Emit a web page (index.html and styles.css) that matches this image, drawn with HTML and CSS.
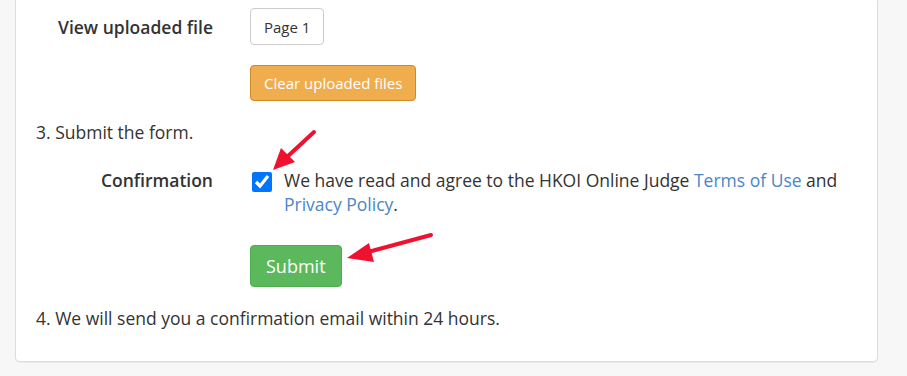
FILE: index.html
```html
<!DOCTYPE html>
<html lang="en">
<head>
  <meta charset="UTF-8">
  <title>Register</title>
  <link rel="stylesheet" href="styles.css">
</head>
<body>
  <div class="card">
    <div class="form-row first">
      <div class="form-label">View uploaded file</div>
      <div class="form-control">
        <button class="btn btn-default">Page 1</button>
      </div>
    </div>
    <div class="form-row clear-row">
      <div class="form-label"></div>
      <div class="form-control">
        <button class="btn btn-warning">Clear uploaded files</button>
      </div>
    </div>
    <p class="step step-3">3. Submit the form.</p>
    <div class="form-row confirm-row">
      <div class="form-label">Confirmation</div>
      <div class="form-control check">
        <input type="checkbox" class="agree" checked>
        <span>We have read and agree to the HKOI Online Judge <a href="#">Terms of Use</a> and <a href="#">Privacy Policy</a>.</span>
      </div>
    </div>
    <div class="form-row submit-row">
      <div class="form-label"></div>
      <div class="form-control">
        <button class="btn btn-success">Submit</button>
      </div>
    </div>
    <p class="step step-4">4. We will send you a confirmation email within 24 hours.</p>
  </div>
  <!-- 标注箭头 -->
  <svg class="arrows" width="907" height="376" viewBox="0 0 907 376">
    <line x1="314" y1="132" x2="287" y2="157" stroke="#f0102f" stroke-width="4" stroke-linecap="round"/>
    <polygon points="273,170 281,148 295,162" fill="#f0102f"/>
    <line x1="431" y1="235" x2="368" y2="252" stroke="#f0102f" stroke-width="4" stroke-linecap="round"/>
    <polygon points="347,258 369,243 374,262" fill="#f0102f"/>
  </svg>
</body>
</html>
```

FILE: styles.css
```css
* {
  padding: 0;
  margin: 0;
  box-sizing: border-box;
}
body {
  background-color: #f7f7f7;
  font-family: "Open Sans", "Liberation Sans", sans-serif;
  font-size: 17.5px;
  line-height: 24px;
  color: #333;
  position: relative;
  height: 376px;
  overflow: hidden;
}
.card {
  width: 863px;
  margin-left: 15px;
  padding: 8px 20px 31px 20px;
  background-color: #fff;
  border: 1px solid #ddd;
  border-top: none;
  border-radius: 0 0 5px 5px;
  box-shadow: 0 1px 1px rgba(0, 0, 0, .06);
}
.form-row {
  display: grid;
  grid-template-columns: 177px 1fr;
  column-gap: 37px;
}
.form-label {
  text-align: right;
  font-weight: 600;
}
.first .form-label {
  padding-top: 7px;
}
.clear-row {
  margin-top: 20px;
}
.step-3 {
  margin-top: 19px;
}
.confirm-row {
  margin-top: 24px;
}
.check {
  display: flex;
  align-items: flex-start;
  gap: 12px;
}
.agree {
  width: 20px;
  height: 20px;
  margin: 4px 0 0 2px;
  flex-shrink: 0;
  accent-color: #0075ff;
}
a {
  color: #4a86c8;
  text-decoration: none;
}
.submit-row {
  margin-top: 29px;
}
.step-4 {
  margin-top: 19px;
}
.btn {
  font-family: inherit;
  border: 1px solid transparent;
  border-radius: 4px;
  cursor: pointer;
}
.btn-default {
  height: 37px;
  padding: 0 13px;
  font-size: 15px;
  color: #333;
  background-color: #fff;
  border-color: #ccc;
}
.btn-warning {
  height: 36px;
  padding: 0 13px;
  font-size: 15px;
  color: #fff;
  background-color: #f0ad4e;
  border-color: #d08a22;
}
.btn-success {
  height: 42px;
  padding: 0 15px;
  font-size: 18px;
  color: #fff;
  background-color: #5cb85c;
  border-color: #4cae4c;
}
.arrows {
  position: absolute;
  left: 0;
  top: 0;
  pointer-events: none;
}
```
